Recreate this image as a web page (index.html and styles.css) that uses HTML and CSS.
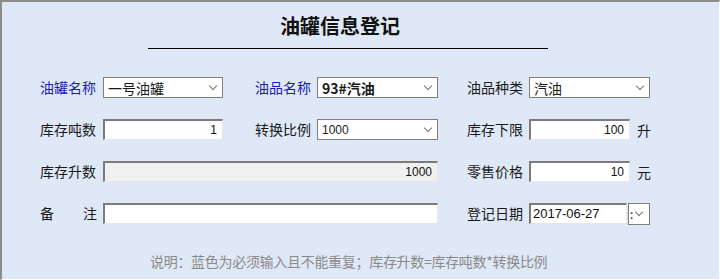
FILE: index.html
```html
<!DOCTYPE html>
<html lang="zh-CN">
<head>
    <meta charset="UTF-8">
    <title>油罐信息登记</title>
    <link rel="stylesheet" href="styles.css">
</head>
<body>
    <div class="window">
        <div class="header">
            <h1>油罐信息登记</h1>
        </div>

        <form class="tank-form">
            <label class="required">油罐名称</label>
            <div class="select"><span>一号油罐</span><i class="chev"></i></div>
            <span></span>
            <label class="required">油品名称</label>
            <div class="select bold"><span>93#汽油</span><i class="chev"></i></div>
            <span></span>
            <label>油品种类</label>
            <div class="select"><span>汽油</span><i class="chev"></i></div>

            <label>库存吨数</label>
            <input class="field num" type="text" value="1">
            <span></span>
            <label>转换比例</label>
            <div class="select num"><span>1000</span><i class="chev"></i></div>
            <span></span>
            <label>库存下限</label>
            <div class="with-unit">
                <input class="field num short" type="text" value="100">
                <span class="unit">升</span>
            </div>

            <label>库存升数</label>
            <input class="field num wide" type="text" value="1000" disabled>
            <span></span>
            <label>零售价格</label>
            <div class="with-unit">
                <input class="field num short" type="text" value="10">
                <span class="unit">元</span>
            </div>

            <label class="spread"><span>备</span><span>注</span></label>
            <input class="field wide" type="text">
            <span></span>
            <label>登记日期</label>
            <div class="date">
                <input class="field num date-input" type="text" value="2017-06-27">
                <div class="date-btn"><span>:</span><i class="chev"></i></div>
            </div>
        </form>

        <p class="note">说明：蓝色为必须输入且不能重复；库存升数=库存吨数*转换比例</p>
    </div>
</body>
</html>
```

FILE: styles.css
```css
body {
    margin: 0;
    padding: 0;
    font-family: "Noto Sans CJK SC", "Liberation Sans", sans-serif;
    color: #1a1a1a;
}

.window {
    box-sizing: border-box;
    width: 720px;
    height: 280px;
    background-color: #dfe8f6;
    border-style: solid;
    border-width: 2px 1px 1px 2px;
    border-color: #8c8c8c #ffffff #ffffff #8c8c8c;
}

/* Title with rule below */
.header {
    width: 400px;
    margin-left: 146px;
    padding-top: 12px;
    border-bottom: 1px solid #000;
    height: 34px;
}

h1 {
    margin: 0;
    padding-right: 16px;
    text-align: center;
    font-size: 20px;
    line-height: 24px;
    font-weight: bold;
    color: #111;
}

/* Form grid */
.tank-form {
    display: grid;
    grid-template-columns: 63px 120px 32px 62px 121px 29px 62px 121px;
    grid-auto-rows: 21px;
    row-gap: 21px;
    margin: 28px 0 0 38px;
    align-items: center;
}

label {
    font-size: 14px;
    line-height: 21px;
    white-space: nowrap;
}

label.required {
    color: #1c1cb4;
}

label.spread {
    display: flex;
    justify-content: space-between;
    width: 57px;
}

.select {
    box-sizing: border-box;
    height: 21px;
    border: 1px solid #7f7f7f;
    background: #fff;
    display: flex;
    align-items: center;
    justify-content: space-between;
    padding: 0 6px 0 4px;
    font-size: 14px;
}

.select.bold {
    font-weight: bold;
}

.select.num span {
    font-family: "Liberation Sans", sans-serif;
    font-size: 12px;
}

.chev {
    width: 5px;
    height: 5px;
    border-right: 1px solid #777;
    border-bottom: 1px solid #777;
    transform: rotate(45deg);
    margin-top: -4px;
}

.field {
    box-sizing: border-box;
    height: 21px;
    width: 120px;
    margin: 0;
    padding: 0 5px;
    background: #fff;
    border-style: solid;
    border-width: 2px 1px 1px 2px;
    border-color: #7c7c7c #e6e6e6 #e6e6e6 #7c7c7c;
    font-family: "Liberation Sans", sans-serif;
    font-size: 12px;
    color: #111;
}

.field.num {
    text-align: right;
}

.field.wide {
    grid-column: 2 / 6;
    width: 335px;
}

.field:disabled {
    background: #f0f0f0;
    color: #111;
}

.with-unit {
    display: flex;
    align-items: center;
    gap: 7px;
}

.field.short {
    width: 101px;
}

.unit {
    font-size: 14px;
}

.date {
    display: flex;
    gap: 1px;
}

.field.date-input {
    width: 98px;
    text-align: left;
    padding-left: 2px;
    font-size: 13px;
}

.date-btn {
    box-sizing: border-box;
    width: 22px;
    height: 22px;
    border: 1px solid #7f7f7f;
    background: #fff;
    display: flex;
    align-items: center;
    gap: 3px;
    padding-left: 1px;
    font-size: 12px;
}

.note {
    margin: 29px 0 0 148px;
    font-size: 14px;
    line-height: 16px;
    letter-spacing: -0.3px;
    color: #8a8a8a;
}
```
